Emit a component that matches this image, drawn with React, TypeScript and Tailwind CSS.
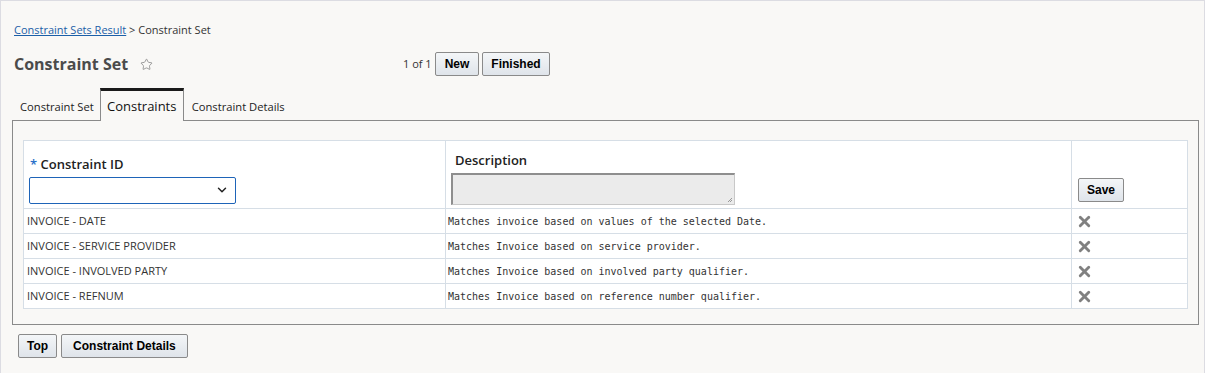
import {ChevronDown, Star, X} from "lucide-react";

interface Row {
    id: string
    desc: string
}

const rows: Row[] = [
    {id: 'INVOICE - DATE', desc: 'Matches invoice based on values of the selected Date.'},
    {id: 'INVOICE - SERVICE PROVIDER', desc: 'Matches Invoice based on service provider.'},
    {id: 'INVOICE - INVOLVED PARTY', desc: 'Matches Invoice based on involved party qualifier.'},
    {id: 'INVOICE - REFNUM', desc: 'Matches Invoice based on reference number qualifier.'},
];

function Btn({label, className = ''}: { label: string, className?: string }) {
    return <button
        className={`h-[24px] px-[8px] border border-[#8a8a8a] rounded-[2px] bg-gradient-to-b from-[#f4f6f8] to-[#dfe4ea] text-[12px] font-bold text-black font-['Liberation_Sans',sans-serif] leading-none ${className}`}>
        {label}
    </button>
}

function App() {
    return <div
        className="w-[1205px] h-[373px] bg-[#f9f8f6] border-t border-x border-[#dcdce2] font-['Open_Sans',sans-serif] text-[#333] overflow-hidden">
        <div className="pt-[21px] pl-[13px] text-[11px] leading-[16px]">
            <a className="text-[#1b5fa8] underline">Constraint Sets Result</a>
            <span className="text-[#333]"> &gt; Constraint Set</span>
        </div>
        <div className="flex items-center mt-[12px] pl-[13px] h-[28px]">
            <div className="w-[389px] flex items-center">
                <h1 className="text-[16px] font-bold text-[#4b4b4b] leading-none">Constraint Set</h1>
                <Star className="ml-[12px] text-[#888]" size={13} strokeWidth={1.5}/>
            </div>
            <div className="flex items-center gap-[3px]">
                <span className="text-[11px] text-[#333]">1 of 1</span>
                <Btn label="New" className="px-[9px]"/>
                <Btn label="Finished" className="px-[7px]"/>
            </div>
        </div>
        <div className="mt-[10px] ml-[11px] w-[1187px]">
            <div className="flex items-end h-[33px]">
                <div className="pl-[8px] pr-[6px] pt-[3px] h-[30px] flex items-center text-[11.2px] text-[#222] border-b border-[#8a8a8a]">Constraint Set</div>
                <div className="w-[84px] pt-[2px] h-[33px] flex items-center justify-center text-[13px] text-[#111] bg-[#f9f8f6] border-x border-[#8a8a8a] border-t-[3px] border-t-[#1a1a1a]">Constraints</div>
                <div className="pl-[8px] pt-[3px] h-[30px] flex items-center text-[11.2px] text-[#222] border-b border-[#8a8a8a] flex-1">Constraint Details</div>
            </div>
            <div className="border border-t-0 border-[#8a8a8a] h-[204px] pt-[19px] px-[10px]">
                <table className="w-[1165px] border-collapse bg-white">
                    <thead>
                    <tr className="h-[68px]">
                        <th className="w-[422px] border border-[#d6dee6] text-left align-top pt-[14px] pl-[5px] font-normal">
                            <div className="text-[13px] font-semibold text-[#222] pl-[1px]"><span className="text-[#2a6fc9]">*</span> Constraint ID</div>
                            <div className="mt-[2px] w-[207px] h-[27px] border border-[#1e64b8] rounded-[2px] bg-white flex items-center justify-end pr-[6px]">
                                <ChevronDown size={14} strokeWidth={2.5} className="text-[#222]"/>
                            </div>
                        </th>
                        <th className="w-[626px] border border-[#d6dee6] text-left align-top pt-[10px] pl-[5px] font-normal">
                            <div className="text-[13px] font-semibold text-[#222] pl-[4px]">Description</div>
                            <div className="relative mt-[2px] w-[284px] h-[32px] bg-[#ebebeb] border border-[#c8c8c8] border-t-[2px] border-l-[2px] border-t-[#8e8e8e] border-l-[#8e8e8e]">
                                <svg className="absolute right-[1px] bottom-[1px]" width="6" height="6" viewBox="0 0 6 6">
                                    <path d="M5 1L1 5M5 3L3 5" stroke="#999" strokeWidth="1"/>
                                </svg>
                            </div>
                        </th>
                        <th className="border border-[#d6dee6] text-left align-bottom pb-[6px] pl-[6px] font-normal">
                            <Btn label="Save" className="h-[23px] px-[6px]"/>
                        </th>
                    </tr>
                    </thead>
                    <tbody>
                    {rows.map(r => <tr key={r.id} className="h-[25px]">
                        <td className="border border-[#d6dee6] pl-[3px] text-[11px] text-[#333]">{r.id}</td>
                        <td className="border border-[#d6dee6] pl-[2px] text-[10px] text-[#333] font-['DejaVu_Sans_Mono',monospace]">{r.desc}</td>
                        <td className="border border-[#d6dee6] pl-[4px]">
                            <X size={17} strokeWidth={4} className="text-[#808080]"/>
                        </td>
                    </tr>)}
                    </tbody>
                </table>
            </div>
        </div>
        <div className="flex gap-[4px] mt-[9px] pl-[17px]">
            <Btn label="Top"/>
            <Btn label="Constraint Details" className="px-[11px]"/>
        </div>
    </div>
}

export default App;
